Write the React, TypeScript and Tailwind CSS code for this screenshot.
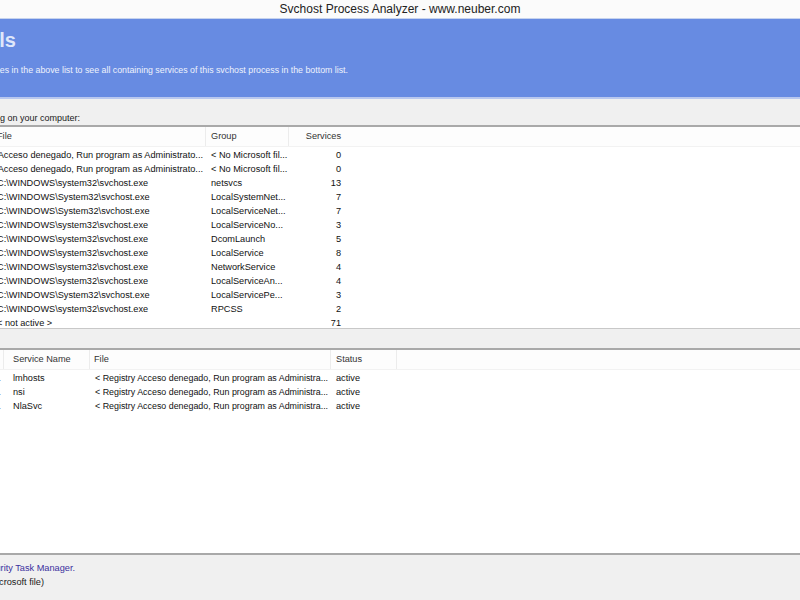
import React from "react";

const topRows: [string, string, string][] = [
  ["< Registry: Acceso denegado, Run program as Administrato...", "< No Microsoft fil...", "0"],
  ["< Registry: Acceso denegado, Run program as Administrato...", "< No Microsoft fil...", "0"],
  ["C:\\WINDOWS\\system32\\svchost.exe", "netsvcs", "13"],
  ["C:\\WINDOWS\\System32\\svchost.exe", "LocalSystemNet...", "7"],
  ["C:\\WINDOWS\\System32\\svchost.exe", "LocalServiceNet...", "7"],
  ["C:\\WINDOWS\\system32\\svchost.exe", "LocalServiceNo...", "3"],
  ["C:\\WINDOWS\\system32\\svchost.exe", "DcomLaunch", "5"],
  ["C:\\WINDOWS\\system32\\svchost.exe", "LocalService", "8"],
  ["C:\\WINDOWS\\system32\\svchost.exe", "NetworkService", "4"],
  ["C:\\WINDOWS\\system32\\svchost.exe", "LocalServiceAn...", "4"],
  ["C:\\WINDOWS\\System32\\svchost.exe", "LocalServicePe...", "3"],
  ["C:\\WINDOWS\\system32\\svchost.exe", "RPCSS", "2"],
  ["< not active >", "", "71"],
];

const bottomRows: [string, string, string][] = [
  ["lmhosts", "< Registry Acceso denegado, Run program as Administra...", "active"],
  ["nsi", "< Registry Acceso denegado, Run program as Administra...", "active"],
  ["NlaSvc", "< Registry Acceso denegado, Run program as Administra...", "active"],
];

export default function App() {
  return (
    <div
      className="w-[800px] h-[600px] overflow-hidden flex flex-col bg-[#f0f0f0] text-[#1a1a1a]"
      style={{ fontFamily: '"Liberation Sans", Arial, sans-serif' }}
    >
      {/* title bar */}
      <div className="h-[19px] bg-[#fbfbfb] flex items-center justify-center text-[12px] text-[#222] border-b border-[#c6d3ee] shrink-0">
        Svchost Process Analyzer - www.neuber.com
      </div>

      {/* blue band */}
      <div className="h-[80px] bg-[#678be2] border-b-2 border-[#b9c8ef] shrink-0 overflow-hidden pt-[9px]">
        <div className="w-[16px] flex justify-end whitespace-nowrap">
          <span className="text-[20px] font-bold text-[#dfe7fa] leading-[24px]">Details</span>
        </div>
        <div className="w-[348px] mt-[12px] flex justify-end whitespace-nowrap">
          <span className="text-[8.8px] text-[#eef2fc]">
            Click on the lines in the above list to see all containing services of this svchost process in the bottom list.
          </span>
        </div>
      </div>

      {/* grey strip */}
      <div className="h-[26px] shrink-0 flex items-end overflow-hidden">
        <div className="w-[80px] flex justify-end whitespace-nowrap">
          <span className="text-[9px]">svchost processes running on your computer:</span>
        </div>
      </div>

      {/* top list */}
      <div className="h-[204px] shrink-0 bg-white border-t-2 border-[#a9a9a9] border-b border-b-[#c8c8c8] overflow-hidden">
        <div className="h-[20px] flex items-center text-[9.2px] text-[#333] bg-[#fdfdfd] border-b border-[#f2f2f2]">
          <div className="w-[206px] border-r border-[#ececec] h-full flex items-center overflow-hidden">
            <span className="-ml-[3px]">File</span>
          </div>
          <div className="w-[83px] pl-[5px] border-r border-[#ececec] h-full flex items-center">Group</div>
          <div className="w-[54px] pr-[2px] h-full flex items-center justify-end">Services</div>
        </div>
        <div className="pt-[2px]">
          {topRows.map((r, i) => (
            <div key={i} className="h-[14px] flex items-center text-[9.2px] text-[#111] whitespace-nowrap">
              <div className="w-[206px] overflow-hidden">
                {r[0].startsWith("< Registry") ? (
                  <div className="w-[203px] flex justify-end">
                    <span>{r[0]}</span>
                  </div>
                ) : (
                  <span className="block -ml-[3px]">{r[0]}</span>
                )}
              </div>
              <div className="w-[83px] pl-[5px] overflow-hidden">{r[1]}</div>
              <div className="w-[54px] pr-[2px] text-right">{r[2]}</div>
            </div>
          ))}
        </div>
      </div>

      {/* grey strip */}
      <div className="h-[19px] shrink-0"></div>

      {/* bottom list */}
      <div className="h-[205px] shrink-0 bg-white border-t-2 border-[#a9a9a9] overflow-hidden">
        <div className="h-[20px] flex items-center text-[9.2px] text-[#333] bg-[#fdfdfd] border-b border-[#f2f2f2]">
          <div className="w-[4px] h-full border-r border-[#ececec]"></div>
          <div className="w-[86px] pl-[9px] border-r border-[#ececec] h-full flex items-center">Service Name</div>
          <div className="w-[241px] pl-[4px] border-r border-[#ececec] h-full flex items-center">File</div>
          <div className="w-[66px] pl-[5px] border-r border-[#ececec] h-full flex items-center">Status</div>
        </div>
        <div className="pt-[2px]">
          {bottomRows.map((r, i) => (
            <div key={i} className="h-[14px] flex items-center text-[9.2px] text-[#111] whitespace-nowrap">
              <div className="w-[4px] overflow-hidden text-[#666]">
                <span className="block -ml-[4px]">..</span>
              </div>
              <div className="w-[86px] pl-[9px] overflow-hidden">{r[0]}</div>
              <div className="w-[241px] pl-[5px] overflow-hidden text-[8.9px]">{r[1]}</div>
              <div className="w-[66px] pl-[5px]">{r[2]}</div>
            </div>
          ))}
        </div>
      </div>

      {/* footer */}
      <div className="flex-1 border-t-2 border-[#a9a9a9] overflow-hidden pt-[6px] text-[9.2px] leading-[14px] whitespace-nowrap">
        <div className="w-[75px] flex justify-end">
          <span className="text-[#3b2f9e]">Security Task Manager.</span>
        </div>
        <div className="w-[44px] flex justify-end">
          <span>(No Microsoft file)</span>
        </div>
      </div>
    </div>
  );
}
